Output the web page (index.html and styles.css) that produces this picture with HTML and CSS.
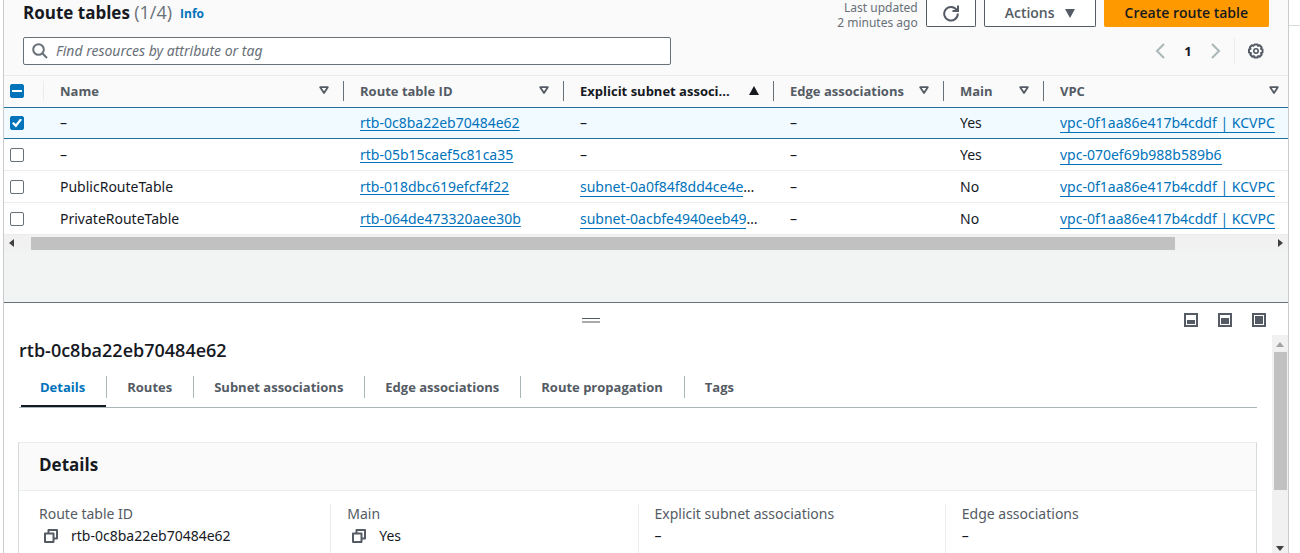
FILE: index.html
```html
<!DOCTYPE html>
<html lang="en">
<head>
<meta charset="utf-8">
<title>Route tables</title>
<link rel="stylesheet" href="styles.css">
</head>
<body>
<svg class="defs" aria-hidden="true">
  <symbol id="sort" viewBox="0 0 10 9"><path d="M1.2 1.2h7.6L5 7z" fill="none" stroke="currentColor" stroke-width="1.8" stroke-linejoin="round"/></symbol>
  <symbol id="sort-up" viewBox="0 0 10 9"><path d="M5 0l5 9H0z" fill="currentColor"/></symbol>
  <symbol id="copy" viewBox="0 0 14 14"><path d="M4.500 4V1H13v8.500H10M1 4.500h8.500V13H1z" fill="none" stroke="currentColor" stroke-width="2" stroke-linejoin="round"/></symbol>
</svg>
<div class="app">
  <main class="console">
    <section class="resources">
      <header class="bar">
        <h1 class="heading">Route tables <span class="count">(1/4)</span></h1>
        <a class="info" href="#">Info</a>
        <p class="updated">Last updated<br>2 minutes ago</p>
        <div class="actions">
          <button class="btn btn-icon" aria-label="Refresh"><svg width="18" height="18" viewBox="0 0 18 18"><path d="M14.700 6A6.800 6.800 0 1 0 15.800 9.500M16 1.500V7h-5.500" fill="none" stroke="currentColor" stroke-width="2"/></svg></button>
          <button class="btn btn-menu">Actions <svg width="10" height="9" viewBox="0 0 10 9"><path d="M0 0h10L5 9z" fill="currentColor"/></svg></button>
          <button class="btn btn-primary">Create route table</button>
        </div>
      </header>
      <div class="filter">
        <label class="search">
          <svg width="16" height="16" viewBox="0 0 16 16"><circle cx="6.500" cy="6.500" r="5.300" fill="none" stroke="currentColor" stroke-width="2"/><path d="M10.500 10.500l4.500 4.500" stroke="currentColor" stroke-width="2"/></svg>
          <input type="text" aria-label="Find resources" placeholder="Find resources by attribute or tag">
        </label>
        <div class="pager">
          <button class="plain arrow" aria-label="Previous page"><svg width="10" height="16" viewBox="0 0 10 16"><path d="M9 1L2 8l7 7" fill="none" stroke="currentColor" stroke-width="2"/></svg></button>
          <button class="plain page">1</button>
          <button class="plain arrow" aria-label="Next page"><svg width="10" height="16" viewBox="0 0 10 16"><path d="M1 1l7 7-7 7" fill="none" stroke="currentColor" stroke-width="2"/></svg></button>
          <span class="rule"></span>
          <button class="plain gear" aria-label="Preferences"><svg width="18" height="18" viewBox="0 0 18 18" fill="none" stroke="currentColor"><path d="M7.500 2h3l.6 1.400 1.500-.6 2 2-.6 1.500 1.500.7v3l-1.500.7.6 1.500-2 2-1.500-.6-.6 1.400h-3l-.6-1.400-1.500.6-2-2 .6-1.500L2 10V7l1.500-.7-.6-1.500 2-2 1.500.6z" transform="translate(0 .5)" stroke-width="2" stroke-linejoin="round"/><circle cx="9" cy="9" r="2.200" stroke-width="1.600"/></svg></button>
        </div>
      </div>
      <table class="grid">
        <colgroup><col class="c-check"><col class="c-name"><col class="c-id"><col class="c-subnet"><col class="c-edge"><col class="c-main"><col></colgroup>
        <thead>
          <tr>
            <th><div class="th th-check"><input class="check mixed" type="checkbox" aria-label="Select all"><span class="divider faint"></span></div></th>
            <th><div class="th"><span>Name</span><svg><use href="#sort"/></svg><span class="divider"></span></div></th>
            <th><div class="th"><span>Route table ID</span><svg><use href="#sort"/></svg><span class="divider"></span></div></th>
            <th><div class="th sorted"><span>Explicit subnet associ...</span><svg><use href="#sort-up"/></svg><span class="divider"></span></div></th>
            <th><div class="th"><span>Edge associations</span><svg><use href="#sort"/></svg><span class="divider"></span></div></th>
            <th><div class="th"><span>Main</span><svg><use href="#sort"/></svg><span class="divider"></span></div></th>
            <th><div class="th th-last"><span>VPC</span><svg><use href="#sort"/></svg></div></th>
          </tr>
        </thead>
        <tbody>
          <tr class="selected">
            <td><input class="check" type="checkbox" aria-label="Select rtb-0c8ba22eb70484e62" checked></td>
            <td>–</td><td><a href="#">rtb-0c8ba22eb70484e62</a></td><td>–</td><td>–</td><td>Yes</td><td><a class="lined" href="#">vpc-0f1aa86e417b4cddf | KCVPC</a></td>
          </tr>
          <tr>
            <td><input class="check" type="checkbox" aria-label="Select rtb-05b15caef5c81ca35"></td>
            <td>–</td><td><a href="#">rtb-05b15caef5c81ca35</a></td><td>–</td><td>–</td><td>Yes</td><td><a class="lined" href="#">vpc-070ef69b988b589b6</a></td>
          </tr>
          <tr>
            <td><input class="check" type="checkbox" aria-label="Select PublicRouteTable"></td>
            <td>PublicRouteTable</td><td><a href="#">rtb-018dbc619efcf4f22</a></td><td><a class="lined" href="#">subnet-0a0f84f8dd4ce4e</a>…</td><td>–</td><td>No</td><td><a class="lined" href="#">vpc-0f1aa86e417b4cddf | KCVPC</a></td>
          </tr>
          <tr>
            <td><input class="check" type="checkbox" aria-label="Select PrivateRouteTable"></td>
            <td>PrivateRouteTable</td><td><a href="#">rtb-064de473320aee30b</a></td><td><a class="lined" href="#">subnet-0acbfe4940eeb49</a>…</td><td>–</td><td>No</td><td><a class="lined" href="#">vpc-0f1aa86e417b4cddf | KCVPC</a></td>
          </tr>
        </tbody>
      </table>
      <div class="scroll-x">
        <svg width="5" height="8" viewBox="0 0 5 8"><path d="M5 0v8L0 4z" fill="currentColor"/></svg>
        <div class="track-x"><div class="thumb-x"></div></div>
        <svg width="5" height="8" viewBox="0 0 5 8"><path d="M0 0v8l5-4z" fill="currentColor"/></svg>
      </div>
    </section>
    <section class="split">
      <div class="split-bar">
        <span></span>
        <span class="grip"></span>
        <div class="sizes">
          <button class="plain" aria-label="Small panel"><svg width="14" height="14" viewBox="0 0 14 14"><path d="M1 1h12v12H1z" fill="none" stroke="currentColor" stroke-width="2"/><path d="M3 7h8v4H3z" fill="currentColor"/></svg></button>
          <button class="plain" aria-label="Medium panel"><svg width="14" height="14" viewBox="0 0 14 14"><path d="M1 1h12v12H1z" fill="none" stroke="currentColor" stroke-width="2"/><path d="M3 5h8v6H3z" fill="currentColor"/></svg></button>
          <button class="plain" aria-label="Large panel"><svg width="14" height="14" viewBox="0 0 14 14"><path d="M1 1h12v12H1z" fill="none" stroke="currentColor" stroke-width="2"/><path d="M3 3h8v8H3z" fill="currentColor"/></svg></button>
        </div>
      </div>
      <div class="split-body">
        <div class="detail">
          <h2 class="title">rtb-0c8ba22eb70484e62</h2>
          <nav class="tabs">
            <button class="tab active">Details</button>
            <button class="tab">Routes</button>
            <button class="tab">Subnet associations</button>
            <button class="tab">Edge associations</button>
            <button class="tab">Route propagation</button>
            <button class="tab">Tags</button>
          </nav>
          <section class="card">
            <h3 class="card-head">Details</h3>
            <dl class="facts">
              <div class="fact"><dt>Route table ID</dt><dd><button class="plain copy" aria-label="Copy route table ID"><svg><use href="#copy"/></svg></button>rtb-0c8ba22eb70484e62</dd></div>
              <div class="fact"><dt>Main</dt><dd><button class="plain copy" aria-label="Copy main"><svg><use href="#copy"/></svg></button>Yes</dd></div>
              <div class="fact"><dt>Explicit subnet associations</dt><dd>–</dd></div>
              <div class="fact"><dt>Edge associations</dt><dd>–</dd></div>
            </dl>
          </section>
        </div>
        <div class="scroll-y">
          <svg class="dim" width="8" height="5" viewBox="0 0 8 5"><path d="M0 5h8L4 0z" fill="currentColor"/></svg>
          <div class="track-y"><div class="thumb-y"></div></div>
          <svg width="8" height="5" viewBox="0 0 8 5"><path d="M0 0h8L4 5z" fill="currentColor"/></svg>
        </div>
      </div>
    </section>
  </main>
  <aside class="gutter"></aside>
</div>
</body>
</html>
```
FILE: styles.css
```css
* { box-sizing: border-box; }
body, h1, h2, h3, p, dl, dd { margin: 0; }
body {
  font: 14px/22px "Noto Sans", "Open Sans", sans-serif;
  color: #16191f;
  background: #fff;
}
button, input { font: inherit; color: inherit; margin: 0; }
button { cursor: pointer; }
svg { display: block; flex: none; }
a { color: #0073bb; text-underline-offset: 2px; }
.defs { position: absolute; width: 0; height: 0; }
.plain { padding: 0; border: 0; background: none; }

.app { display: flex; height: 100vh; overflow: hidden; padding-left: 3px; }
.console {
  flex: 1;
  min-width: 0;
  display: flex;
  flex-direction: column;
  border: solid #c8cccf;
  border-width: 0 1px;
}
.gutter { width: 11px; height: 26px; border-bottom: 1px solid #d5dbdb; }

.resources { flex: none; padding-bottom: 51px; background: #f2f3f3; }
.bar {
  display: flex;
  align-items: center;
  height: 27px;
  padding: 0 19px;
  background: #fafafa;
}
.heading { padding-bottom: 2px; font: 700 17px/24px "Open Sans", sans-serif; }
.count { font-size: 18px; font-weight: 400; color: #687078; }
.info { margin-left: 8px; font: 700 12px/22px "Open Sans", sans-serif; text-decoration: none; }
.updated {
  align-self: flex-start;
  margin-left: auto;
  font-size: 12px;
  line-height: 15px;
  text-align: right;
  color: #687078;
}
.actions { display: flex; gap: 8px; margin-left: 8px; }
.btn {
  height: 27px;
  padding: 0 20px;
  border: 1px solid #545b64;
  border-top: 0;
  border-radius: 0 0 2px 2px;
  background: #fff;
  color: #545b64;
  font: 600 14px/22px "Open Sans", sans-serif;
}
.btn-icon { padding: 0 15px; }
.btn-menu { display: flex; align-items: center; gap: 10px; }
.btn-primary { background: #ff9900; border-color: #ff9900; color: #16191f; }

.filter {
  display: flex;
  justify-content: space-between;
  align-items: center;
  padding: 10px 23px 10px 19px;
  background: #fafafa;
}
.search {
  flex: 0 1 648px;
  display: flex;
  align-items: center;
  gap: 8px;
  height: 28px;
  padding: 0 8px;
  border: 1px solid #687078;
  border-radius: 2px;
  background: #fff;
  color: #687078;
}
.search input { flex: 1; min-width: 0; border: 0; padding: 0; outline: 0; background: none; }
.search input::placeholder { color: #687078; font-style: italic; opacity: 1; }
.pager { display: flex; align-items: center; color: #545b64; }
.arrow { color: #aab7b8; }
.page { width: 46px; font-weight: 700; font-size: 13px; color: #16191f; }
.rule { width: 1px; height: 26px; margin: 0 12px 0 13px; background: #eaeded; }

.grid { width: 100%; table-layout: fixed; border-spacing: 0; background: #fff; }
.c-check { width: 40px; }
.c-name { width: 300px; }
.c-id { width: 220px; }
.c-subnet { width: 210px; }
.c-edge { width: 170px; }
.c-main { width: 100px; }
.grid th { padding: 0; height: 32px; border-top: 1px solid #eaeded; background: #fafafa; }
.th {
  display: flex;
  align-items: center;
  gap: 14px;
  padding: 0 0 2px 16px;
  font: 700 13px/22px "Open Sans", sans-serif;
  color: #545b64;
  white-space: nowrap;
}
.th svg { width: 10px; height: 9px; margin-left: auto; }
.th-check { padding-left: 6px; justify-content: space-between; }
.th-last { padding-right: 9px; }
.sorted { color: #16191f; }
.divider { width: 1px; height: 20px; background: #687078; }
.faint { background: #eaeded; }
.grid td {
  height: 32px;
  padding: 0 0 0 16px;
  border-bottom: 1px solid #eaeded;
  line-height: 22px;
  white-space: nowrap;
}
.grid td:first-child { padding-left: 6px; }
.grid .selected td { background: #f1faff; border-top: 1px solid #1f6f9f; border-bottom-color: #1f6f9f; }
.lined { text-decoration: none; display: inline-block; line-height: 18px; border-bottom: 1px solid #0073bb; }

.check {
  appearance: none;
  display: block;
  width: 14px;
  height: 14px;
  border: 1px solid #687078;
  border-radius: 2px;
  background: #fff;
}
.check:checked, .mixed { display: grid; place-items: center; border-color: #0073bb; background: #0073bb; }
.mixed::before { content: ""; width: 10px; height: 2px; background: #fff; }
.check:checked::before {
  content: "";
  width: 10px;
  height: 9px;
  background: #fff;
  clip-path: polygon(0 55%, 15% 38%, 38% 62%, 82% 0, 100% 14%, 40% 100%);
}

.scroll-x {
  display: flex;
  align-items: center;
  justify-content: space-between;
  gap: 17px;
  height: 16px;
  padding: 0 5px;
  background: #f1f1f1;
  color: #404040;
}
.track-x { flex: 1; }
.thumb-x { width: 93%; height: 13px; background: #c1c1c1; }

.split { flex: 1; min-height: 0; display: flex; flex-direction: column; border-top: 1px solid #687078; }
.split-bar {
  display: grid;
  grid-template-columns: 33fr 18px 38fr;
  align-items: center;
  height: 32px;
  flex: none;
  padding: 2px 22px 0 0;
}
.grip { height: 5px; border-top: 1px solid #545b64; border-bottom: 2px solid #aaa; }
.sizes { display: flex; justify-content: flex-end; gap: 20px; color: #545b64; }
.split-body { flex: 1; min-height: 0; display: flex; }
.detail { flex: 1; min-width: 0; overflow: hidden; padding: 4px 15px 0 14px; }
.title { padding-left: 1px; font: 600 18px/22px "Open Sans", sans-serif; }
.tabs { display: flex; height: 47px; padding-left: 2px; margin-left: 1px; border-bottom: 1px solid #aab7b8; }
.tab {
  display: flex;
  align-items: center;
  height: 22px;
  margin-top: 15px;
  padding: 0 21px 0 20px;
  border: 0;
  border-right: 1px solid #aab7b8;
  background: none;
  color: #545b64;
  font: 700 13px/22px "Open Sans", sans-serif;
}
.tab:last-child { border-right: 0; }
.active { position: relative; padding-left: 19px; color: #0073bb; }
.active::after { content: ""; position: absolute; left: 0; right: 0; bottom: -9px; height: 2px; background: #16191f; }
.card { margin-top: 34px; border: 1px solid #eaeded; border-right-color: #d5dbdb; border-left-color: #d5dbdb; }
.card-head {
  padding: 10px 20px 13px;
  border-bottom: 1px solid #eaeded;
  background: #fafafa;
  font: 700 17px/24px "Open Sans", sans-serif;
}
.facts { display: grid; grid-template-columns: repeat(4, 1fr); padding: 13px 4px 20px; }
.fact { padding-left: 16px; min-height: 70px; }
.fact + .fact { border-left: 1px solid #eaeded; }
.fact dt { line-height: 20px; color: #545b64; }
.fact dd { display: flex; align-items: center; line-height: 24px; }
.copy { margin: 0 13px 0 5px; color: #545b64; }
.copy svg { width: 14px; height: 14px; }
.scroll-y {
  width: 16px;
  display: flex;
  flex-direction: column;
  align-items: center;
  gap: 5px;
  padding: 7px 0 2px;
  background: #f1f1f1;
  color: #404040;
}
.dim { color: #a3a3a3; }
.track-y { flex: 1; }
.thumb-y { width: 13px; height: 73%; background: #c1c1c1; }
```
